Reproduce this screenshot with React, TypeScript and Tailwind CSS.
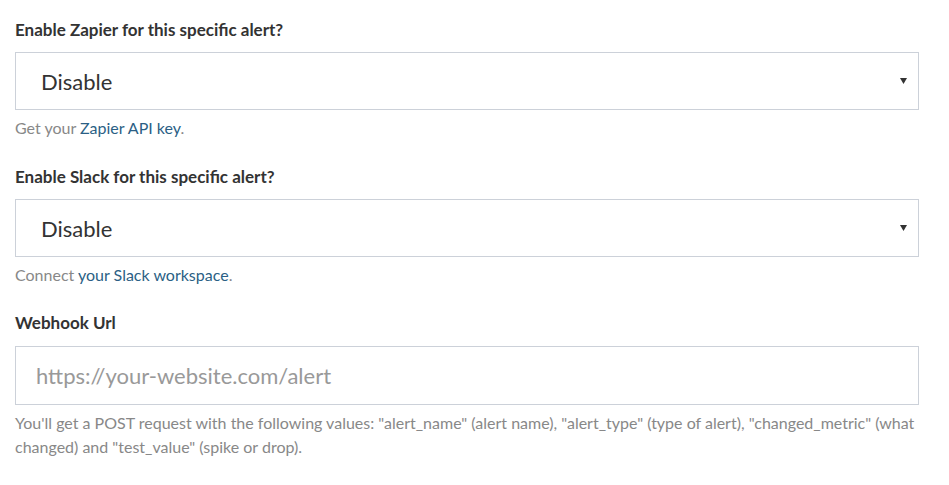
import React from "react";

function Arrow() {
  return (
    <svg width="7" height="6" viewBox="0 0 7 6" className="absolute right-[11px] top-1/2 -translate-y-1/2">
      <path d="M0 0 H7 L3.5 6 Z" fill="#333" />
    </svg>
  );
}

function SelectBox() {
  return (
    <div className="relative mt-[10px] h-[58px] w-[904px] border border-[#ccd1d9] bg-white flex items-center pl-[25px]">
      <span className="text-[22px] text-[#333]">Disable</span>
      <Arrow />
    </div>
  );
}

export default function App() {
  return (
    <div className="min-h-[485px] w-[949px] bg-white pl-[15px] pt-[18px]" style={{ fontFamily: "Lato, 'Open Sans', sans-serif" }}>
      <div className="text-[17px] font-bold text-[#333] leading-[24px]">Enable Zapier for this specific alert?</div>
      <SelectBox />
      <div className="mt-[6px] text-[16px] leading-[24px] text-[#888]">
        Get your <span className="text-[#2b5f85]">Zapier API key</span>.
      </div>
      <div className="mt-[25px] text-[17px] font-bold text-[#333] leading-[24px]">Enable Slack for this specific alert?</div>
      <SelectBox />
      <div className="mt-[6px] text-[16px] leading-[24px] text-[#888]">
        Connect <span className="text-[#2b5f85]">your Slack workspace</span>.
      </div>
      <div className="mt-[24px] text-[17px] font-bold text-[#333] leading-[24px]">Webhook Url</div>
      <div className="mt-[11px] h-[59px] w-[904px] border border-[#ccd1d9] bg-white flex items-center pl-[20px]">
        <span className="text-[22px] text-[#999]">https://your-website.com/alert</span>
      </div>
      <div className="mt-[6px] w-[904px] text-[16px] leading-[24px] text-[#888]">
        You'll get a POST request with the following values: "alert_name" (alert name), "alert_type" (type of alert), "changed_metric" (what changed) and "test_value" (spike or drop).
      </div>
    </div>
  );
}
